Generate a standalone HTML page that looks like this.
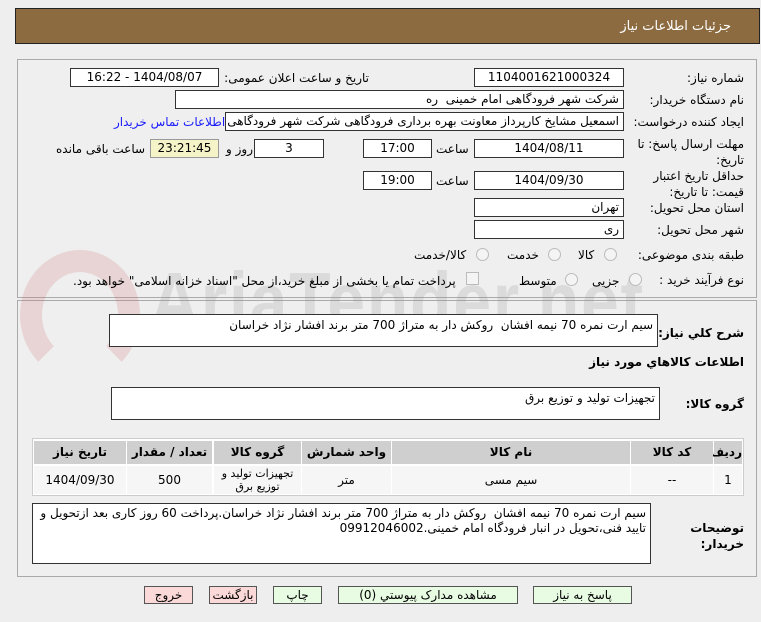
<!DOCTYPE html>
<html><head><meta charset="utf-8"><style>
body{margin:0;width:761px;height:622px;background:#eeeeee;font-family:"DejaVu Sans","Liberation Sans",sans-serif;font-size:12px;color:#000;position:relative;overflow:hidden;direction:rtl}
div,span{position:absolute;box-sizing:border-box}
.hdr{left:15px;top:8px;width:745px;height:36px;background:#8d6b41;border:1px solid #222}
.hdr span{right:28px;top:10px;color:#fff;font-size:13px}
.panel{border:1px solid #aaa;background:#efefef}
.in{background:#fff;border:1px solid #333;height:19px;line-height:17px;text-align:center;white-space:nowrap;overflow:hidden}
.ri{text-align:right;padding-right:4px}
.lb{white-space:nowrap;line-height:16px}
.rad{width:13px;height:13px;border-radius:50%;border:1px solid #bbb;background:#f4f4f4}
.ta{background:#fff;border:1px solid #333;text-align:right;padding:3px 4px;line-height:18px}
.th{background:#cfcfcf;text-align:center;font-weight:bold;line-height:23px;height:23px;top:441px}
.td{background:#f6f6f6;text-align:center;top:466px;height:28px;line-height:28px}
.btn{top:586px;height:18px;border:1px solid #555;text-align:center;line-height:16px}
.g{background:#e8fbe3}.p{background:#fcd9d9}
.wm{direction:ltr;font-family:"Liberation Sans",sans-serif;font-weight:bold;color:rgba(150,150,150,0.22);font-size:80px;left:150px;top:255px;letter-spacing:2px;transform:scaleX(0.85);transform-origin:left top;white-space:nowrap}
.wc{left:20px;top:250px;width:120px;height:130px;border:22px solid rgba(210,120,120,0.22);border-radius:50%;border-bottom-color:transparent}
</style></head><body>
<div class="hdr"><span>جزئیات اطلاعات نیاز</span></div>
<div class="panel" style="left:17px;top:59px;width:740px;height:239px"></div>
<div class="panel" style="left:17px;top:300px;width:740px;height:277px"></div>
<div class="wc"></div>
<div class="wm">AriaTender.net</div>

<div class="lb" style="right:17px;top:70px">شماره نیاز:</div>
<div class="in" style="left:474px;top:68px;width:150px">1104001621000324</div>
<div class="lb" style="right:392px;top:70px">تاریخ و ساعت اعلان عمومی:</div>
<div class="in" style="left:70px;top:68px;width:149px">1404/08/07 - 16:22</div>

<div class="lb" style="right:17px;top:92px">نام دستگاه خریدار:</div>
<div class="in ri" style="left:175px;top:90px;width:449px">شرکت شهر فرودگاهی امام خمینی&nbsp; ره</div>

<div class="lb" style="right:17px;top:114px">ایجاد کننده درخواست:</div>
<div class="in ri" style="left:225px;top:112px;width:399px">اسمعیل مشایخ کارپرداز معاونت بهره برداری فرودگاهی شرکت شهر فرودگاهی ا</div>
<div class="lb" style="left:114px;top:114px;color:#1a1aff">اطلاعات تماس خریدار</div>

<div class="lb" style="right:17px;top:136px;width:110px;text-align:right">مهلت ارسال پاسخ: تا<br>تاریخ:</div>
<div class="in" style="left:474px;top:139px;width:150px">1404/08/11</div>
<div class="lb" style="left:436px;top:141px">ساعت</div>
<div class="in" style="left:363px;top:139px;width:69px">17:00</div>
<div class="in" style="left:254px;top:139px;width:70px">3</div>
<div class="lb" style="left:226px;top:141px">روز و</div>
<div class="in" style="left:150px;top:139px;width:69px;background:#f5f3c8;border-color:#999">23:21:45</div>
<div class="lb" style="left:56px;top:141px">ساعت باقی مانده</div>

<div class="lb" style="right:17px;top:168px;width:110px;text-align:right">حداقل تاریخ اعتبار<br>قیمت: تا تاریخ:</div>
<div class="in" style="left:474px;top:171px;width:150px">1404/09/30</div>
<div class="lb" style="left:436px;top:173px">ساعت</div>
<div class="in" style="left:363px;top:171px;width:69px">19:00</div>

<div class="lb" style="right:17px;top:200px">استان محل تحویل:</div>
<div class="in ri" style="left:474px;top:198px;width:150px">تهران</div>
<div class="lb" style="right:17px;top:222px">شهر محل تحویل:</div>
<div class="in ri" style="left:474px;top:220px;width:150px">ری</div>

<div class="lb" style="right:17px;top:247px">طبقه بندی موضوعی:</div>
<div class="rad" style="left:604px;top:248px"></div><div class="lb" style="left:578px;top:247px">کالا</div>
<div class="rad" style="left:548px;top:248px"></div><div class="lb" style="left:507px;top:247px">خدمت</div>
<div class="rad" style="left:476px;top:248px"></div><div class="lb" style="left:414px;top:247px">کالا/خدمت</div>

<div class="lb" style="right:17px;top:272px">نوع فرآیند خرید :</div>
<div class="rad" style="left:629px;top:273px"></div><div class="lb" style="left:592px;top:273px">جزیی</div>
<div class="rad" style="left:565px;top:273px"></div><div class="lb" style="left:519px;top:273px">متوسط</div>
<div style="left:466px;top:272px;width:13px;height:13px;border:1px solid #bbb;background:#f4f4f4"></div>
<div class="lb" style="left:73px;top:273px">پرداخت تمام یا بخشی از مبلغ خرید،از محل "اسناد خزانه اسلامی" خواهد بود.</div>

<div class="lb" style="right:17px;top:325px;font-weight:bold">شرح کلي نياز:</div>
<div class="ta" style="left:109px;top:314px;width:549px;height:33px;padding-top:1px">سیم ارت نمره 70 نیمه افشان&nbsp; روکش دار به متراژ 700 متر برند افشار نژاد خراسان</div>
<div class="lb" style="right:17px;top:354px;font-weight:bold">اطلاعات کالاهاي مورد نياز</div>
<div class="lb" style="right:17px;top:396px;font-weight:bold">گروه کالا:</div>
<div class="ta" style="left:111px;top:387px;width:549px;height:33px;padding-top:1px">تجهیزات تولید و توزیع برق</div>

<div style="left:32px;top:438px;width:712px;height:58px;background:#fff;border:1px solid #ccc"></div>
<div class="th" style="left:714px;width:28px">ردیف</div>
<div class="th" style="left:631px;width:82px">کد کالا</div>
<div class="th" style="left:392px;width:238px">نام کالا</div>
<div class="th" style="left:302px;width:89px">واحد شمارش</div>
<div class="th" style="left:214px;width:87px">گروه کالا</div>
<div class="th" style="left:127px;width:85px">تعداد / مقدار</div>
<div class="th" style="left:34px;width:92px">تاریخ نیاز</div>
<div class="td" style="left:714px;width:28px">1</div>
<div class="td" style="left:631px;width:82px">--</div>
<div class="td" style="left:392px;width:238px">سیم مسی</div>
<div class="td" style="left:302px;width:89px">متر</div>
<div class="td" style="left:214px;width:87px;line-height:13px;padding-top:1px;font-size:11px">تجهیزات تولید و<br>توزیع برق</div>
<div class="td" style="left:127px;width:85px">500</div>
<div class="td" style="left:34px;width:92px">1404/09/30</div>

<div class="lb" style="right:17px;top:520px;font-weight:bold;width:60px;text-align:right">توضیحات<br>خریدار:</div>
<div class="ta" style="left:32px;top:503px;width:619px;height:61px;padding-top:2px;line-height:15px;letter-spacing:-0.2px">سیم ارت نمره 70 نیمه افشان&nbsp; روکش دار به متراژ 700 متر برند افشار نژاد خراسان.پرداخت 60 روز کاری بعد ازتحویل و تایید فنی،تحویل در انبار فرودگاه امام خمینی.09912046002</div>

<div class="btn p" style="left:144px;width:49px">خروج</div>
<div class="btn p" style="left:209px;width:48px">بازگشت</div>
<div class="btn g" style="left:273px;width:49px">چاپ</div>
<div class="btn g" style="left:338px;width:180px">مشاهده مدارک پیوستي (0)</div>
<div class="btn g" style="left:533px;width:99px">پاسخ به نیاز</div>
</body></html>
